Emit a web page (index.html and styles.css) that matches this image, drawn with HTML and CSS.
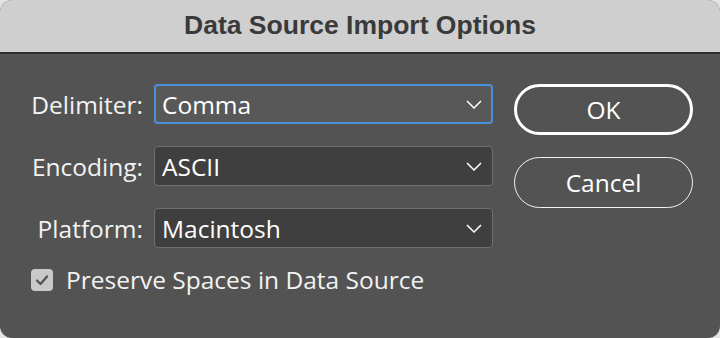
FILE: index.html
```html
<!DOCTYPE html>
<html lang="en">
<head>
    <meta charset="UTF-8">
    <title>Data Source Import Options</title>
    <link rel="stylesheet" href="styles.css">
</head>
<body>
    <div class="dialog">
        <div class="titlebar">Data Source Import Options</div>
        <div class="content">
            <div class="form">
                <label class="label">Delimiter:</label>
                <div class="select focused">
                    <span>Comma</span>
                    <svg class="chevron" viewBox="0 0 16 9" width="16" height="9"><path d="M1 1 L8 8 L15 1" fill="none" stroke="#fff" stroke-width="1.5"/></svg>
                </div>

                <label class="label">Encoding:</label>
                <div class="select">
                    <span>ASCII</span>
                    <svg class="chevron" viewBox="0 0 16 9" width="16" height="9"><path d="M1 1 L8 8 L15 1" fill="none" stroke="#fff" stroke-width="1.5"/></svg>
                </div>

                <label class="label">Platform:</label>
                <div class="select">
                    <span>Macintosh</span>
                    <svg class="chevron" viewBox="0 0 16 9" width="16" height="9"><path d="M1 1 L8 8 L15 1" fill="none" stroke="#fff" stroke-width="1.5"/></svg>
                </div>

                <div class="check-row">
                    <span class="checkbox">
                        <svg viewBox="0 0 22 22" width="22" height="22"><path d="M6 11.5 L9.5 15 L16 7.5" fill="none" stroke="#555" stroke-width="2.4" stroke-linecap="round" stroke-linejoin="round"/></svg>
                    </span>
                    <span>Preserve Spaces in Data Source</span>
                </div>
            </div>
            <div class="buttons">
                <button class="btn btn-default">OK</button>
                <button class="btn">Cancel</button>
            </div>
        </div>
    </div>
</body>
</html>
```

FILE: styles.css
```css
body {
    margin: 0;
    background: #e4e4e4;
    font-family: 'Open Sans', 'Liberation Sans', sans-serif;
}
.dialog {
    width: 720px;
    height: 338px;
    border-radius: 12px;
    overflow: hidden;
    background: #535353;
}
.titlebar {
    height: 54px;
    background: #cfcfcf;
    border-bottom: 2px solid #2f2f2f;
    box-sizing: border-box;
    text-align: center;
    font-family: 'Liberation Sans', Arial, sans-serif;
    font-weight: 700;
    font-size: 26.5px;
    line-height: 50px;
    color: #3a3a3a;
}
.content {
    display: flex;
    padding: 30px 26px 0 29px;
}
.form {
    display: grid;
    grid-template-columns: 114px 339px;
    column-gap: 11px;
    row-gap: 22px;
    align-items: center;
}
.label {
    text-align: right;
    color: #f2f2f2;
    font-size: 24.5px;
}
.select {
    height: 40px;
    box-sizing: border-box;
    border: 1px solid #707070;
    border-radius: 4px;
    background: #3f3f3f;
    display: flex;
    align-items: center;
    justify-content: space-between;
    padding: 0 10px 0 7px;
    color: #fff;
    font-size: 24.5px;
}
.select.focused {
    background: #585858;
    border: 2px solid #4a90d9;
    padding-left: 6px;
    padding-right: 9px;
}
.check-row {
    grid-column: 1 / 3;
    display: flex;
    align-items: center;
    gap: 13px;
    margin-top: -7px;
    margin-left: 2px;
    color: #f2f2f2;
    font-size: 24.5px;
}
.checkbox {
    width: 22px;
    height: 22px;
    border-radius: 4px;
    background: #c9c9c9;
    display: flex;
}
.buttons {
    display: flex;
    flex-direction: column;
    gap: 22px;
    margin-left: 21px;
    margin-top: 0;
}
.btn {
    width: 179px;
    height: 51px;
    border-radius: 26px;
    border: 1.5px solid #f2f2f2;
    background: transparent;
    color: #fff;
    font-family: 'Open Sans', 'Liberation Sans', sans-serif;
    font-size: 24.5px;
}
.btn-default {
    border: 3px solid #fff;
}
```
